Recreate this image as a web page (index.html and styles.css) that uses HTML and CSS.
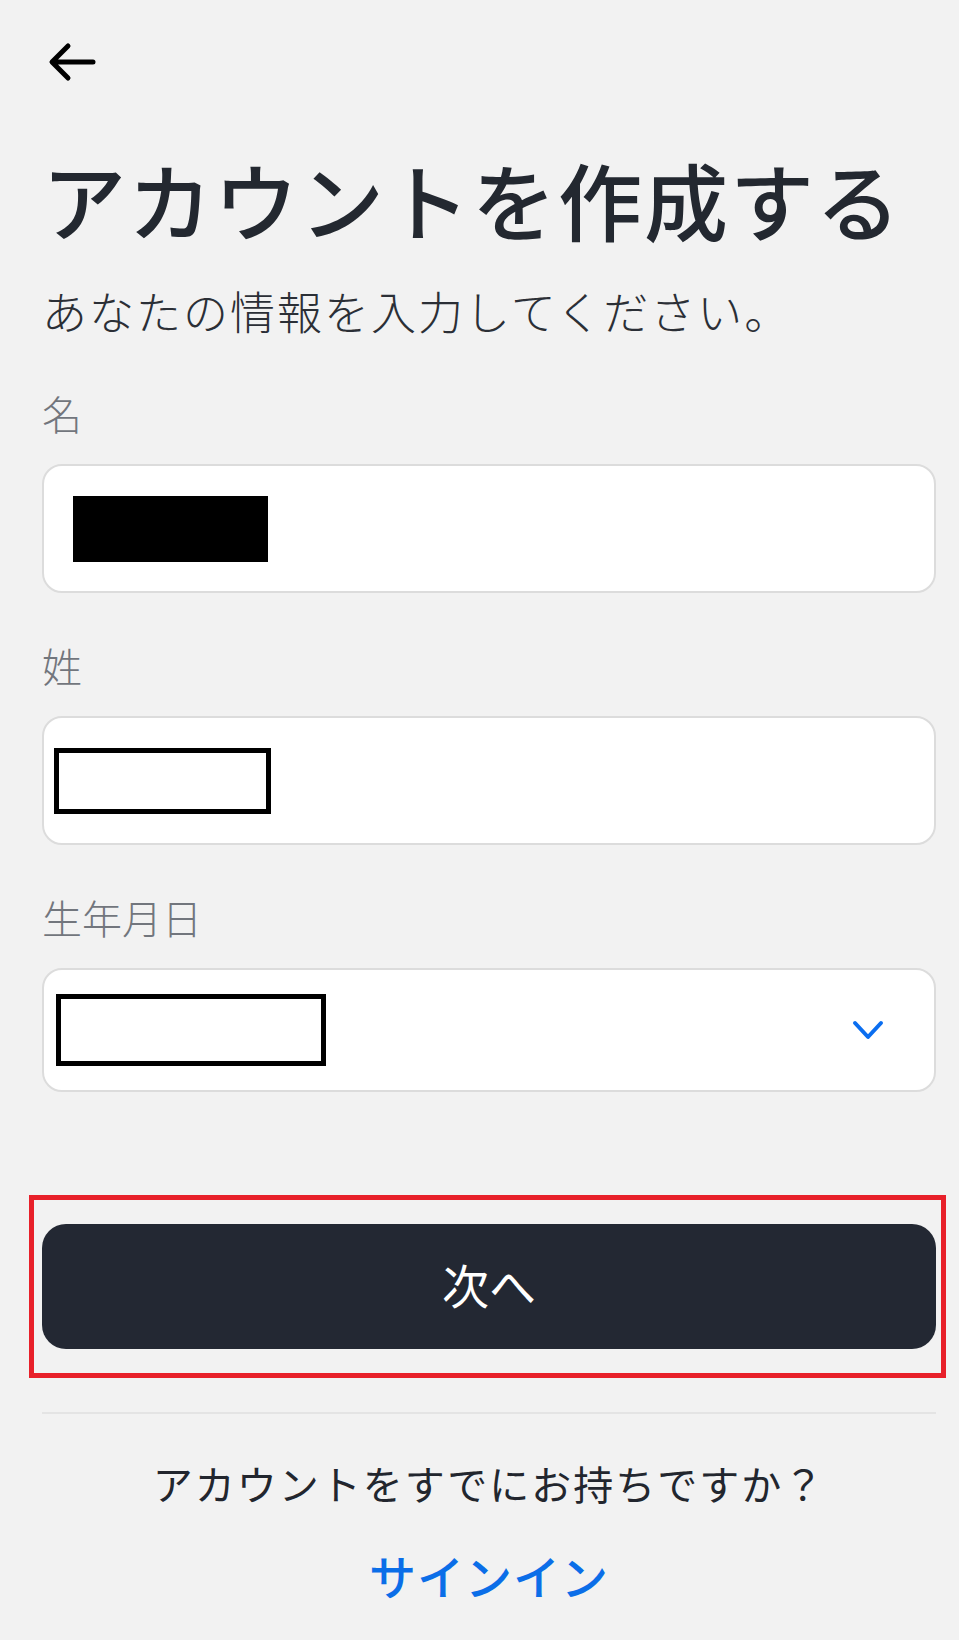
FILE: index.html
```html
<!DOCTYPE html>
<html lang="ja">
<head>
	<meta charset="utf-8">
	<title>アカウントを作成する</title>
	<link rel="stylesheet" href="styles.css">
</head>
<body>
	<div class="page">
		<a class="back" href="#">
			<svg width="48" height="40" viewBox="0 0 48 40">
				<path d="M45 20 H5 M20 4 L4 20 L20 36" fill="none" stroke="#000" stroke-width="5" stroke-linecap="round" stroke-linejoin="round"/>
			</svg>
		</a>
		<h1 class="title">アカウントを作成する</h1>
		<p class="sub">あなたの情報を入力してください。</p>

		<div class="field">
			<div class="label">名</div>
			<div class="input">
				<span class="mask mask-fill"></span>
			</div>
		</div>
		<div class="field">
			<div class="label">姓</div>
			<div class="input">
				<span class="mask mask-line"></span>
			</div>
		</div>
		<div class="field">
			<div class="label">生年月日</div>
			<div class="input input-date">
				<span class="mask mask-line mask-wide"></span>
				<svg class="chev" width="32" height="20" viewBox="0 0 32 20">
					<path d="M3 3 L16 17 L29 3" fill="none" stroke="#0b6ef0" stroke-width="4" stroke-linecap="round" stroke-linejoin="round"/>
				</svg>
			</div>
		</div>

		<div class="mark">
			<button class="next">次へ</button>
		</div>

		<div class="line"></div>
		<p class="have">アカウントをすでにお持ちですか？</p>
		<a class="signin" href="#">サインイン</a>
	</div>
</body>
</html>
```

FILE: styles.css
```css
*{
	margin: 0px;
	padding: 0px;
	box-sizing: border-box;
}
body{
	background: #f2f2f2;
	font-family: "Noto Sans CJK JP", "Noto Sans", sans-serif;
	color: #22262e;
}
.page{
	width: 959px;
	min-height: 1640px;
	padding: 42px 23px 0 42px;
}
.back{
	display: block;
	width: 48px;
	height: 40px;
	margin-left: 6px;
}
.back svg{
	display: block;
}
.title{
	margin-top: 75px;
	font-size: 84px;
	line-height: 1;
	font-weight: 500;
	letter-spacing: 2px;
	color: #232830;
	white-space: nowrap;
}
.sub{
	margin-top: 47px;
	font-size: 45px;
	line-height: 1;
	font-weight: 300;
	letter-spacing: 2px;
	color: #2b2f36;
	white-space: nowrap;
}
.field{
	margin-top: 60px;
}
.field + .field{
	margin-top: 52px;
}
.label{
	font-size: 40px;
	line-height: 1;
	font-weight: 300;
	color: #72767d;
	margin-bottom: 31px;
}
.input{
	height: 129px;
	background: #fff;
	border: 2px solid #dcdcdc;
	border-radius: 20px;
	display: flex;
	align-items: center;
	padding-left: 10px;
	padding-right: 50px;
}
.input-date{
	height: 124px;
}
.mask{
	display: block;
	height: 66px;
}
.mask-fill{
	width: 195px;
	background: #000;
	margin-left: 19px;
}
.mask-line{
	width: 217px;
	border: 5px solid #000;
	background: #fff;
}
.mask-wide{
	width: 270px;
	height: 72px;
	margin-left: 2px;
}
.chev{
	display: block;
	margin-left: auto;
}
.mark{
	margin-top: 103px;
	margin-left: -13px;
	margin-right: -10px;
	border: 5px solid #e8202a;
	padding: 24px 5px 24px 8px;
}
.next{
	display: block;
	width: 100%;
	height: 125px;
	border: none;
	border-radius: 24px;
	background: #232833;
	color: #fff;
	font-family: "Noto Sans CJK JP", sans-serif;
	font-size: 47px;
	padding-bottom: 6px;
	cursor: pointer;
}
.line{
	margin-top: 34px;
	height: 2px;
	background: #e4e4e4;
}
.have{
	margin-top: 49px;
	text-align: center;
	font-size: 40px;
	line-height: 1;
	letter-spacing: 2px;
	color: #22262e;
}
.signin{
	display: block;
	margin-top: 48px;
	text-align: center;
	font-size: 47px;
	line-height: 1;
	font-weight: 500;
	letter-spacing: 1px;
	color: #0b6ee8;
	text-decoration: none;
}
```
